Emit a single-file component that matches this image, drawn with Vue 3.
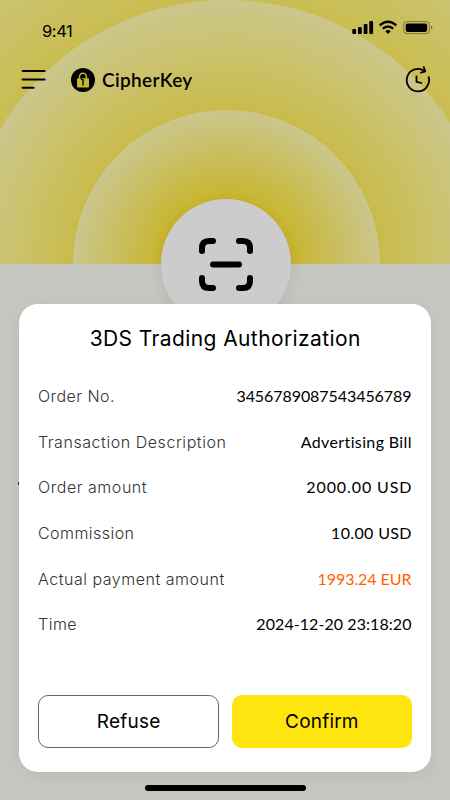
<script setup>
const rows = [
  { label: 'Order No.', value: '3456789087543456789', ls: 0.45, vs: -0.07 },
  { label: 'Transaction Description', value: 'Advertising Bill', ls: 0.55, vs: 0.37 },
  { label: 'Order amount', value: '2000.00 USD', ls: 0.54, vs: 0.9 },
  { label: 'Commission', value: '10.00 USD', ls: 0.45, vs: 0.36 },
  { label: 'Actual payment amount', value: '1993.24 EUR', ls: 0.52, vs: -0.06, accent: true },
  { label: 'Time', value: '2024-12-20 23:18:20', ls: 0.5, vs: 0.07 },
]
</script>

<template>
  <div class="screen">
    <div class="hero">
      <div class="ring outer"></div>
      <div class="ring inner"></div>
    </div>
    <div class="scan">
      <svg width="56" height="56" viewBox="0 0 56 56" fill="none" stroke="#000" stroke-width="6" stroke-linecap="round" stroke-linejoin="round">
        <path d="M4 14V11Q4 4 11 4H15M41 4H45Q52 4 52 11V14M4 41V44Q4 51 11 51H15M41 51H45Q52 51 52 44V41M15 27.5H41" />
      </svg>
    </div>

    <div class="status">
      <span class="clock">9:41</span>
      <svg class="indicators" width="82" height="16" viewBox="0 0 82 16">
        <rect x="0.3" y="9" width="3.8" height="5" rx="1.1" />
        <rect x="6" y="7" width="3.8" height="7" rx="1.1" />
        <rect x="11.7" y="4" width="3.8" height="10" rx="1.1" />
        <rect x="17.3" y="1" width="3.8" height="13" rx="1.1" />
        <g fill="none" stroke="#000" stroke-width="2.3">
          <path d="M27.7 5.3Q36 -1.8 44.3 5.3" />
          <path d="M30.8 8.7Q36 4.2 41.2 8.7" />
        </g>
        <path d="M33.3 11.2Q36 9 38.7 11.2L36 14Z" />
        <rect x="51.7" y="1.6" width="25.6" height="12" rx="3.2" fill="none" stroke="#000" stroke-opacity=".38" />
        <rect x="53.7" y="3.5" width="21.4" height="8.4" rx="1.8" />
        <path d="M79 5.6Q82 7.5 79 9.4Z" fill-opacity=".45" />
      </svg>
    </div>

    <header class="bar">
      <svg class="menu" width="26" height="22" viewBox="0 0 26 22" stroke="#000" stroke-width="2" stroke-linecap="round">
        <path d="M2.6 2H24.6M2.6 10.4H24.6M2.6 18.8H13.6" />
      </svg>
      <svg class="logo" width="24" height="24" viewBox="0 0 24 24">
        <circle cx="12" cy="12" r="12" />
        <path d="M8.6 10.5V8.6A3.4 3.4 0 0 1 15.4 8.6V10.5" fill="none" stroke="#c9b82d" stroke-width="1.5" />
        <rect x="6" y="10.2" width="12" height="9.2" rx="1" fill="#c9b82d" />
        <path d="M13.7 8.9A2 2 0 1 0 12.2 11.9V17.4M12.2 14H11M12.2 16.2H11" fill="none" stroke="#000" stroke-width="1.1" />
      </svg>
      <span class="brand">CipherKey</span>
      <svg class="history" width="26" height="28" viewBox="0 0 26 28" fill="none" stroke="#000" stroke-width="1.8" stroke-linecap="round" stroke-linejoin="round">
        <path d="M19.6 5.2A11.2 11.2 0 1 0 23.7 11.2" />
        <path d="M18.8 1.2L20.3 5.5L15.9 6.7M11.5 10.3V15.8L16.4 17" />
      </svg>
    </header>

    <span class="peek"></span>
    <section class="dialog">
      <h1>3DS Trading Authorization</h1>
      <div class="rows">
        <div v-for="r in rows" :key="r.label" class="row">
          <span class="label" :style="{ letterSpacing: r.ls + 'px' }">{{ r.label }}</span>
          <span class="value" :class="{ accent: r.accent }" :style="{ letterSpacing: r.vs + 'px', marginRight: -r.vs + 'px' }">{{ r.value }}</span>
        </div>
      </div>
      <div class="actions">
        <button class="refuse">Refuse</button>
        <button class="confirm">Confirm</button>
      </div>
    </section>
    <div class="home"></div>
  </div>
</template>

<style>
body { margin: 0; }
</style>
<style scoped>
.screen { position: relative; box-sizing: border-box; width: 450px; height: 800px; overflow: hidden; background: #c5c6c0; color: #000; font-family: Inter, sans-serif; display: flex; flex-direction: column; align-items: center; }
.hero { position: absolute; inset: 0 0 auto; height: 264px; overflow: hidden; background: radial-gradient(circle at 227px 264px, #cabd50 264px, #cbc47a 365px); }
.ring { position: absolute; border-radius: 50%; }
.outer { width: 528px; height: 528px; left: -37px; top: 0; background: radial-gradient(circle closest-side, #c9bb4a 153px, #cbc26c 210px, #cbc68c 264px); }
.inner { width: 307px; height: 307px; left: 73px; top: 110px; background: radial-gradient(circle closest-side, #c8b52d 65px, #c9bd59 105px, #cbc68c 153px); }
.scan { position: absolute; left: 161px; top: 199px; width: 129.5px; height: 129.5px; border-radius: 50%; background: #ccc; box-shadow: 0 5px 14px rgba(0, 0, 0, .08); }
.scan svg { display: block; margin: 37.5px 0 0 36.6px; }
.status { position: relative; width: 390px; height: 44px; display: flex; justify-content: space-between; margin-top: 20px; }
.clock { font-size: 16.5px; line-height: 22px; margin-left: 12px; letter-spacing: -.4px; }
.indicators { margin-right: -14px; }
.bar { position: relative; display: flex; align-items: center; width: 410px; height: 32px; }
.menu { margin-top: -1px; }
.logo { margin-left: 25px; margin-top: -1px; }
.brand { margin-left: 7px; font: 600 19px/24px Lato, sans-serif; letter-spacing: .35px; }
.history { margin-left: auto; margin-right: -.5px; margin-top: -1px; }
.peek { position: absolute; left: 18px; top: 482px; width: 1px; height: 3px; background: #222; }
.dialog { position: relative; box-sizing: border-box; width: 412px; height: 468px; margin-top: 207.5px; padding: 20px 19.5px 23.8px 19px; border-radius: 19px; background: #fff; box-shadow: 0 4px 14px rgba(0, 0, 0, .05); display: flex; flex-direction: column; }
h1 { margin: 0 0 0 1px; font-size: 21px; line-height: 30px; font-weight: 400; text-align: center; letter-spacing: .4px; white-space: nowrap; }
.rows { margin-top: 20px; }
.row { height: 45.6px; display: flex; align-items: center; justify-content: space-between; white-space: nowrap; }
.label { font-size: 16px; font-weight: 300; color: #333; }
.value { font: 400 16px/22px Lato, sans-serif; }
.accent { color: #ff6200; }
.actions { margin-top: auto; display: flex; gap: 13px; }
button { flex: 1; box-sizing: border-box; height: 53px; padding: 1px 0 0; border: 0; border-radius: 10px; font: 400 19px Inter, sans-serif; color: #000; letter-spacing: .2px; }
.refuse { background: #fff; border: 1px solid #666; }
.confirm { background: #ffe510; }
.home { position: absolute; left: 145px; top: 785px; width: 161px; height: 6px; border-radius: 3px; background: #000; }
</style>
